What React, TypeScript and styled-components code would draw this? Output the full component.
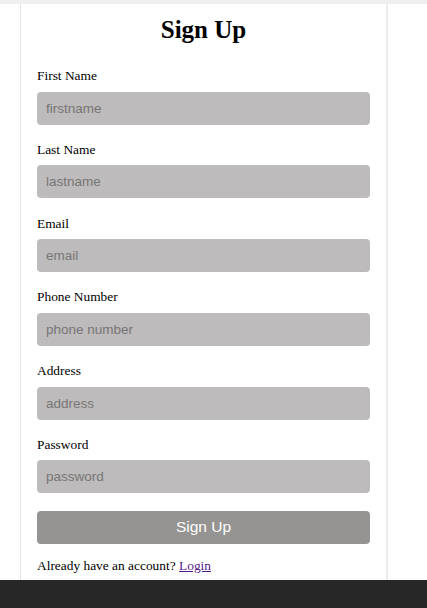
import React from "react";
import styled, { createGlobalStyle } from "styled-components";

const Global = createGlobalStyle`
  html, body { margin: 0; padding: 0; background: #ffffff; }
  body { font-family: "Liberation Serif", "Times New Roman", serif; }
  * { box-sizing: border-box; }
`;

const Page = styled.div`
  display: flex;
  flex-direction: column;
  height: 608px;
  overflow: hidden;
`;

const TopStrip = styled.div`
  height: 4px;
  background: #efefef;
  flex: none;
`;

const Main = styled.div`
  flex: 1;
  display: flex;
  padding-left: 20px;
`;

const Card = styled.div`
  width: 368px;
  border-left: 1px solid #e3e3e3;
  border-right: 2px solid #ececec;
  padding: 0 16px 0 16px;
  display: flex;
  flex-direction: column;
`;

const Title = styled.h1`
  margin: 11px 0 23px;
  font-family: "Liberation Serif", "Times New Roman", serif;
  font-weight: bold;
  font-size: 25px;
  line-height: 30px;
  text-align: center;
  color: #000;
`;

const Field = styled.div`
  display: flex;
  flex-direction: column;
  margin-bottom: 17.3px;
`;

const Label = styled.label`
  font-size: 13.4px;
  line-height: 16px;
  color: #000;
  margin-bottom: 7.5px;
`;

const Input = styled.input`
  height: 33px;
  width: 100%;
  border: none;
  border-radius: 4px;
  background: #bdbbbb;
  padding: 0 9px;
  font-family: "Liberation Sans", Arial, sans-serif;
  font-size: 13.5px;
  color: #333;
  outline: none;
  &::placeholder { color: #777676; }
`;

const SubmitButton = styled.button`
  height: 33px;
  width: 100%;
  border: none;
  border-radius: 4px;
  background: #959492;
  color: #ffffff;
  font-family: "Liberation Sans", Arial, sans-serif;
  font-size: 15.5px;
  margin-bottom: 14px;
`;

const Footnote = styled.p`
  margin: 0;
  font-size: 13.4px;
  line-height: 16px;
  color: #000;
`;

const LoginLink = styled.a`
  color: #551a8b;
  text-decoration: underline;
`;

const Footer = styled.div`
  height: 28px;
  flex: none;
  background: #272727;
`;

const fields = [
  ["First Name", "firstname", "text"],
  ["Last Name", "lastname", "text"],
  ["Email", "email", "email"],
  ["Phone Number", "phone number", "tel"],
  ["Address", "address", "text"],
  ["Password", "password", "password"],
];

export default function App() {
  return (
    <Page>
      <Global />
      <TopStrip />
      <Main>
        <Card>
          <Title>Sign Up</Title>
          {fields.map(([label, ph, type]) => (
            <Field key={label}>
              <Label>{label}</Label>
              <Input type={type} placeholder={ph} />
            </Field>
          ))}
          <SubmitButton>Sign Up</SubmitButton>
          <Footnote>
            Already have an account? <LoginLink href="#">Login</LoginLink>
          </Footnote>
        </Card>
      </Main>
      <Footer />
    </Page>
  );
}
